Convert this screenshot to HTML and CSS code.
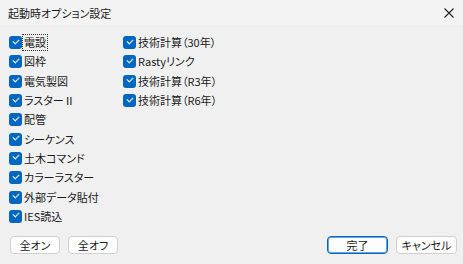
FILE: index.html
```html
<!DOCTYPE html>
<html lang="ja">
<head>
    <meta charset="UTF-8">
    <title>起動時オプション設定</title>
    <link rel="stylesheet" href="styles.css">
</head>
<body>
<div class="dialog">
    <div class="titlebar">
        <span class="title">起動時オプション設定</span>
        <svg class="close" width="10" height="10" viewBox="0 0 10 10">
            <path d="M0.5 0.5 L9.5 9.5 M9.5 0.5 L0.5 9.5" stroke="#222" stroke-width="1.1"/>
        </svg>
    </div>
    <div class="options">
        <div class="column">
            <label class="item"><span class="box"></span><span class="text focus">電設</span></label>
            <label class="item"><span class="box"></span><span class="text">図枠</span></label>
            <label class="item"><span class="box"></span><span class="text">電気製図</span></label>
            <label class="item"><span class="box"></span><span class="text">ラスターⅡ</span></label>
            <label class="item"><span class="box"></span><span class="text">配管</span></label>
            <label class="item"><span class="box"></span><span class="text">シーケンス</span></label>
            <label class="item"><span class="box"></span><span class="text">土木コマンド</span></label>
            <label class="item"><span class="box"></span><span class="text">カラーラスター</span></label>
            <label class="item"><span class="box"></span><span class="text">外部データ貼付</span></label>
            <label class="item"><span class="box"></span><span class="text">IES読込</span></label>
        </div>
        <div class="column">
            <label class="item"><span class="box"></span><span class="text">技術計算（30年）</span></label>
            <label class="item"><span class="box"></span><span class="text">Rastyリンク</span></label>
            <label class="item"><span class="box"></span><span class="text">技術計算（R3年）</span></label>
            <label class="item"><span class="box"></span><span class="text">技術計算（R6年）</span></label>
        </div>
    </div>
    <div class="buttons">
        <button class="btn">全オン</button>
        <button class="btn">全オフ</button>
        <span class="spacer"></span>
        <button class="btn primary">完了</button>
        <button class="btn">キャンセル</button>
    </div>
</div>
</body>
</html>
```

FILE: styles.css
```css
body {
    margin: 0;
    background: #f0f0f0;
    font-family: "Noto Sans CJK JP", "Noto Sans", sans-serif;
    font-size: 11px;
    font-feature-settings: "palt";
    color: #1a1a1a;
}

.dialog {
    width: 463px;
    height: 264px;
    display: flex;
    flex-direction: column;
}

.titlebar {
    height: 25px;
    flex: none;
    background: #f3f3f3;
    display: flex;
    align-items: center;
    padding: 0 5px 0 8px;
    box-sizing: border-box;
}

.title {
    flex: 1;
}

.close {
    margin-right: 4px;
}

.options {
    display: flex;
    padding: 8px 0 0 9px;
}

.column {
    display: flex;
    flex-direction: column;
    width: 114px;
}

.item {
    display: flex;
    align-items: center;
    height: 19.3px;
    flex: none;
    white-space: nowrap;
}

.box {
    width: 13px;
    height: 13px;
    border-radius: 3px;
    background: #0067c0;
    margin-right: 1px;
    position: relative;
    flex: none;
}

.box::after {
    content: "";
    position: absolute;
    left: 3.5px;
    top: 2.5px;
    width: 5px;
    height: 3px;
    border-left: 1.2px solid #fff;
    border-bottom: 1.2px solid #fff;
    transform: rotate(-45deg);
}

.text {
    line-height: 15px;
    padding: 0 1px;
}

.focus {
    outline: 1px dotted #333;
}

.buttons {
    display: flex;
    margin-top: 10px;
    padding: 0 6px 0 10px;
    gap: 8px;
}

.spacer {
    flex: 1;
}

.btn {
    font-family: inherit;
    font-size: 11px;
    font-feature-settings: "palt";
    white-space: nowrap;
    width: 50px;
    height: 18px;
    padding: 0;
    background: #fdfdfd;
    border: 1px solid #d0d0d0;
    border-radius: 4px;
    color: #1a1a1a;
    line-height: 16px;
}

.btn.primary,
.btn.primary + .btn {
    width: 61px;
}

.btn.primary {
    border-color: #0067c0;
    box-shadow: inset 0 0 0 1px #6aa4de;
}
```
